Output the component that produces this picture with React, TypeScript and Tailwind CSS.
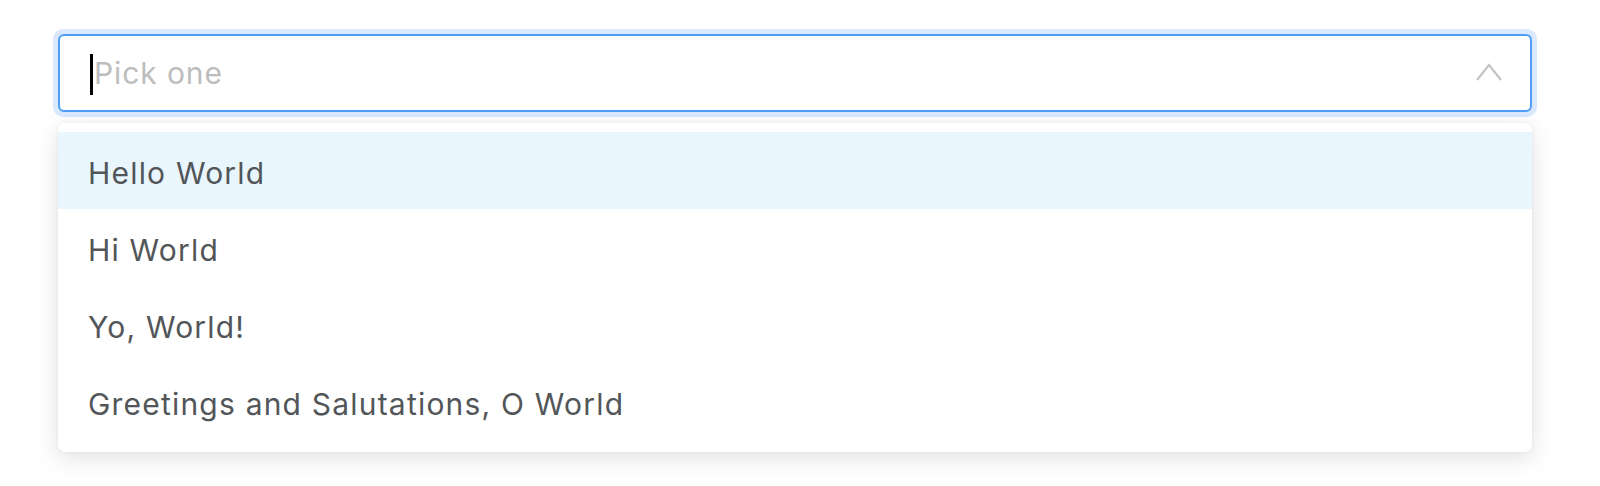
import React from "react";

const items = ["Hello World", "Hi World", "Yo, World!", "Greetings and Salutations, O World"];

export default function App() {
  return (
    <div className="w-[1600px] h-[486px] bg-white overflow-hidden" style={{ fontFamily: "Inter, 'Noto Sans', sans-serif" }}>
      <div className="ml-[53px] mt-[29px] w-[1484px]">
        <div className="rounded-[10px] p-[5px] bg-[#dae9fd]">
          <div className="h-[78px] rounded-[6px] border-2 border-[#4f9ef6] bg-white flex items-center pl-[30px] pr-[27px]">
            <div className="w-[3px] h-[41px] bg-black mt-[2px]" />
            <span className="ml-[1px] text-[30px] tracking-[0.9px] text-[#bdbdbd] mt-[1px]">Pick one</span>
            <div className="flex-1" />
            <svg width="28" height="20" viewBox="0 0 28 20" className="mt-[-2px]">
              <polyline points="2,18 14,3 26,18" fill="none" stroke="#c4c4c4" strokeWidth="2.2" />
            </svg>
          </div>
        </div>
        <div className="mt-[6px] mx-[5px] rounded-[7px] bg-white pt-[9px] pb-[12px] shadow-[0_6px_24px_rgba(0,0,0,0.12),0_0_4px_rgba(0,0,0,0.05)]">
          {items.map((t, i) => (
            <div
              key={t}
              className={`h-[77px] flex items-center pl-[30px] text-[30px] tracking-[1.2px] text-[#525659] pt-[5px] ${i === 0 ? "bg-[#e9f6fe]" : ""}`}
            >
              {t}
            </div>
          ))}
        </div>
      </div>
    </div>
  );
}
